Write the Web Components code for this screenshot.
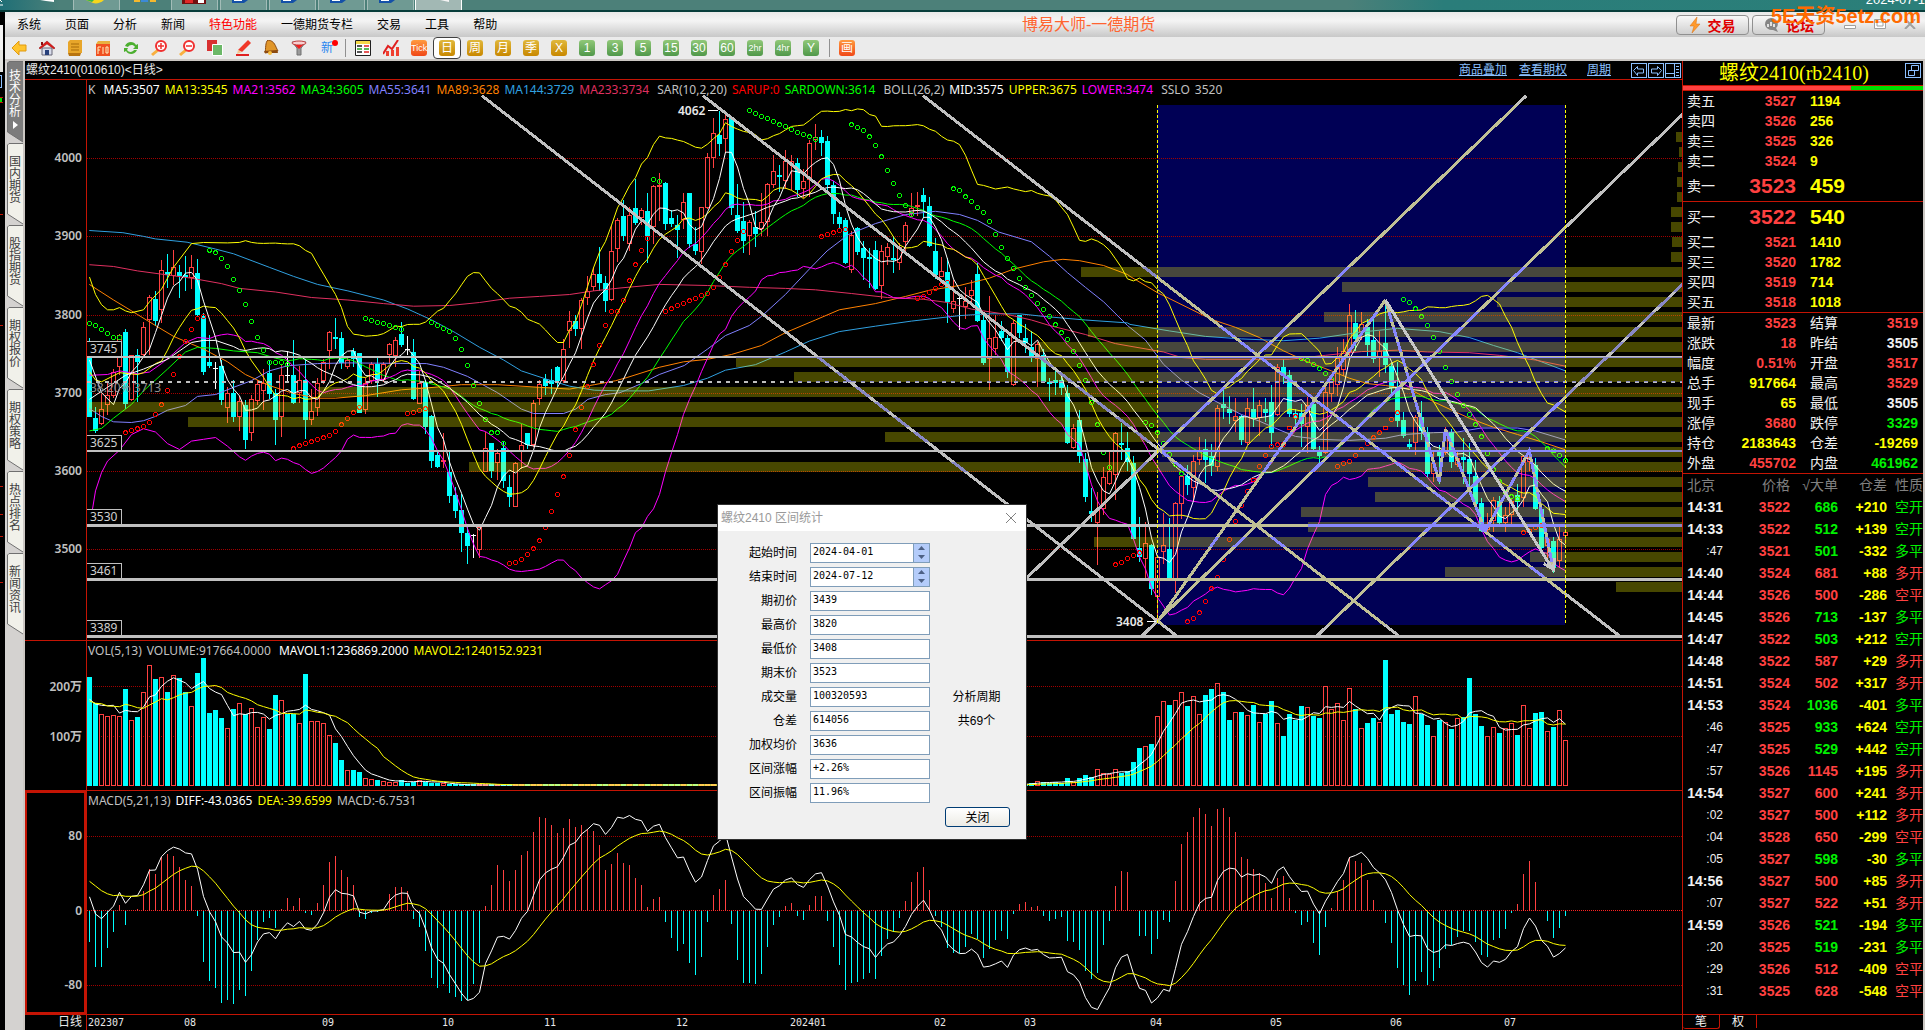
<!DOCTYPE html>
<html lang="zh-CN">
<head>
<meta charset="utf-8">
<title>博易大师</title>
<style>
  body {
    --rule: #c41404;
    --up: #ff4040;
    --down: #00ffff;
    --gain: #00f000;
    --frame: #cbc7c3;
    background: #000000;
    display: flex;
    flex-direction: column;
    font-family: "Liberation Sans", "Noto Sans CJK SC", sans-serif;
    font-size: 12px;
    line-height: 16px;
    margin: 0;
    min-height: 100vh;
    overflow: hidden;
    position: relative;
  }
</style>
</head>
<body>
<tb-taskbar></tb-taskbar>
<tb-window>
  <tb-menu-bar slot="menu"></tb-menu-bar>
  <tb-tool-bar slot="tools"></tb-tool-bar>
  <tb-side-tabs></tb-side-tabs>
  <tb-chart-board></tb-chart-board>
  <tb-quote-panel></tb-quote-panel>
</tb-window>
<tb-stats-dialog></tb-stats-dialog>

<script>
// Shared base
// Clones markup into an open shadow root
class TBElement extends HTMLElement {
  constructor() {
    super();
    const template = document.createElement( 'template' );
    template.innerHTML = this.markup();
    this.attachShadow( {mode: 'open'} );
    this.shadowRoot.appendChild( template.content.cloneNode( true ) );
  }
}

class TBTaskbar extends TBElement {
  markup() {
    const tiles = [73, 171, 220, 269, 318, 367].map( ( x ) => `<path d="M${x}.5 0V10.5h46V0" fill="#6f9a93" stroke="#a3bdb8"/>` ).join( '' );
    const docs = [232, 281, 330, 379].map( ( x ) => `<path d="M${x} 0h16l-4 3H${x}z" fill="#1450a8"/><path d="M${x + 2} 0h8v1h-8z" fill="#ffffff"/>` ).join( '' );
    return `
      <style>
        :host {
          background: linear-gradient( to right, #1f6f76 0, #4c8079 60px, #4c8079 70%, #2a7d7a 75%, #2b7f79 100% );
          border-bottom: 2px solid #063c3a;
          box-sizing: border-box;
          display: block;
          height: 12px;
          overflow: hidden;
          position: relative;
        }
        svg {
          display: block;
        }
        time {
          color: #ffffff;
          font-size: 13px;
          line-height: 14px;
          position: absolute;
          right: 0;
          top: -7px;
          white-space: nowrap;
        }
      </style>
      <svg width="600" height="10" aria-hidden="true">
        ${tiles}
        <path d="M415.5 0V10.5h46V0" fill="#a2b8b4" stroke="#ffffff"/>
        <path d="M40 0h14v2l-8-1z" fill="#ffffff"/>
        <path d="M0 5h3M0 0l2 2" stroke="#ffffff"/>
        <path d="M86 0h18c-3 3-8 4-11 3z" fill="#f7d51d"/><path d="M86 0h8l-2 2z" fill="#39b54a"/>
        <path d="M134 0h6v2h-6zM150 0h6v2h-6z" fill="#f5b82e"/><path d="M141 0h7v2h-7z" fill="#3b8ad8"/>
        <path d="M182 0h24v4h-24z" fill="#701010"/><path d="M185 0h8v3h-8z" fill="#e02828"/><path d="M198 0h6v3h-6z" fill="#ffffff"/>
        ${docs}
        <path d="M440 0h9v2z" fill="#f4f4f4"/>
      </svg>
      <time>2024-07-1</time>
    `;
  }
}

class TBWindow extends TBElement {
  markup() {
    return `
      <style>
        :host {
          display: flex;
          flex: 1 0 auto;
        }
        svg {
          flex: none;
        }
        main {
          display: flex;
          flex: 1;
          flex-direction: column;
          min-width: 0;
        }
        div {
          display: flex;
          flex: 1;
        }
      </style>
      <svg width="5" height="600" shape-rendering="crispEdges" aria-hidden="true">
        <path d="M0 13h3v25h-3z" fill="#f4f4f4"/><path d="M0 38h3v22h-3z" fill="#e4e4e0"/>
        <path d="M0 63.5h1.5v12H0" fill="none" stroke="#8cc0ff"/>
        <path d="M0 86h2v4H0z" fill="#00e000"/>
        <path d="M0 85h3M0 90h3M0 202h3M0 313h3M0 474h3M0 502h3M0 524h3M0 570h3" stroke="#c41404"/>
      </svg>
      <main>
        <slot name="menu"></slot>
        <slot name="tools"></slot>
        <div><slot></slot></div>
      </main>
    `;
  }
}

class TBMenuBar extends TBElement {
  markup() {
    const items = ['系统', '页面', '分析', '新闻', '特色功能', '一德期货专栏', '交易', '工具', '帮助'];
    return `
      <style>
        :host {
          align-items: center;
          background: linear-gradient( #e8e8e8, #f4f4f4 35%, #c8c8c8 );
          display: flex;
          height: 25px;
          position: relative;
        }
        nav {
          display: flex;
        }
        nav a {
          color: #000000;
          padding: 0 12px;
          text-decoration: none;
        }
        nav a:nth-child( 5 ) {
          color: #ff0000;
        }
        h1 {
          color: #ff6430;
          font-size: 16px;
          font-weight: normal;
          line-height: 24px;
          margin: 0 auto;
          padding-right: 8px;
        }
        .tools {
          display: flex;
          gap: 3px;
          padding-right: 10px;
        }
        .tools button {
          align-items: center;
          background: linear-gradient( #f8f8f8, #d0d0d0 );
          border: 1px solid #909090;
          border-radius: 4px;
          color: #e00000;
          display: flex;
          font: bold 14px "Noto Sans CJK SC", sans-serif;
          gap: 6px;
          height: 20px;
          justify-content: center;
          padding: 0;
          width: 73px;
        }
        .box {
          background: none;
          border: 0;
          height: 20px;
          padding: 0;
          width: 30px;
        }
        strong {
          color: #ff6a00;
          font-size: 20px;
          line-height: 24px;
          position: absolute;
          right: 4px;
          top: -8px;
          white-space: nowrap;
        }
      </style>
      <nav>${items.map( ( item ) => `<a href="#">${item}</a>` ).join( '' )}</nav>
      <h1>博易大师-一德期货</h1>
      <div class="tools">
        <button type="button">
          <svg width="12" height="16"><path d="M8 0L1 9h4L3 16l8-9H7z" fill="#ff9a2e" stroke="#d87010" stroke-width=".5"/></svg>交易
        </button>
        <button type="button">
          <svg width="17" height="16"><path d="M8 1a7 6 0 1 0 2 12l5 2-2-4A7 6 0 0 0 8 1z" fill="#858585"/><path d="M5 7v3M8 5v4M11 7v3" stroke="#ffffff" stroke-width="1.5"/></svg>论坛
        </button>
      </div>
      <button class="box" type="button" aria-label="最小化"><svg width="12" height="10"><path d="M.5 6.5h11v3H.5z" fill="#ffffff" stroke="#a0a0a0"/></svg></button>
      <button class="box" type="button" aria-label="还原"><svg width="12" height="10"><path d="M.5.5h11v9H.5zM3 3h6v4H3z" fill="#ffffff" stroke="#a0a0a0"/></svg></button>
      <button class="box" type="button" aria-label="关闭"><svg width="12" height="10"><path d="M1 0l10 10M11 0L1 10" stroke="#a0a0a0" stroke-width="2"/></svg></button>
      <strong>5E天资5etz.com</strong>
    `;
  }
}

// Toolbar drawings on a 16 x 16 field
const ICONS = {
  '后退': '<path d="M1 8l7-7v4h7v6H8v4z" fill="#ffc42e" stroke="#e09a10"/>',
  '首页': '<path d="M3 8h10v7H3z" fill="#d8dcea" stroke="#667"/><path d="M0 8l8-7 8 7-1 1-7-5-7 5z" fill="#e01818" stroke="#8c1010" stroke-width=".5"/><path d="M6 10h4v5H6z" fill="#28407a"/><path d="M2 2h2v3H2z" fill="#8c1010"/>',
  '公告': '<path d="M3 0h12v13H1V2z" fill="#e8a62a"/><path d="M1 13h13l-1 3H2z" fill="#b87410"/><path d="M4 4h8M4 7h8M4 10h8" stroke="#a86a08"/>',
  'F10': '<path d="M1 4h14v12H1z" fill="#f05020"/><path d="M1 4l2-3h12v3z" fill="#e8b040"/><path d="M3 14V7h3M3 10h2M8 7v7M11 7h2v6h-2z" fill="none" stroke="#fff0c0"/>',
  '刷新': '<path d="M2 6c2-5 9-5 11-1l2-1v5h-5l2-2c-2-3-6-2-7 0zM14 10c-2 5-9 5-11 1l-2 1V8h4L4 10c2 3 6 2 7 0z" fill="#4caf30"/>',
  '放大': '<path d="M6 9l2 2-6 5-2-2z" fill="#f8b040"/><circle cx="10" cy="6" r="5" fill="#ffffff" stroke="#f03030" stroke-width="2"/><path d="M7 6h6M10 3v6" stroke="#f03030" stroke-width="1.5"/>',
  '缩小': '<path d="M6 9l2 2-6 5-2-2z" fill="#f8b040"/><circle cx="10" cy="6" r="5" fill="#ffffff" stroke="#f03030" stroke-width="2"/><path d="M7 6h6" stroke="#f03030" stroke-width="1.5"/>',
  '叠加': '<path d="M0 0h10v11H0z" fill="#d83030"/><path d="M5.5 4.5h10v11h-10z" fill="#6cb868" stroke="#ffffff"/>',
  '画笔': '<path d="M13 0l3 3-9 9-4-2z" fill="#f03828"/><path d="M3 10l4 2-5 2z" fill="#f4c890"/><path d="M1 15h13" stroke="#e02020" stroke-width="2"/>',
  '预警': '<path d="M5 0c7 1 7 6 10 11L2 13C3 9 2 2 5 0z" fill="#e0962a" stroke="#8c4a10"/><path d="M1 11l13-1 1 3H2z" fill="#8c4a10"/><circle cx="7" cy="13" r="2" fill="#f8c040"/>',
  '筛选': '<path d="M1 2h14l-5 6v7H6V8z" fill="#9a9a9a" stroke="#707070"/><ellipse cx="8" cy="3" rx="7" ry="2" fill="#f8d0d0" stroke="#c04040"/><path d="M4 5h8L8 9z" fill="#f02020"/>',
  '报价': '<path d="M.5.5h15v15H.5z" fill="#ffffff" stroke="#202020"/><path d="M1 1h14v3H1z" fill="#f4d848"/><path d="M2 6h5M2 12h5" stroke="#202020" stroke-width="1.5"/><path d="M2 9h5M9 9h5" stroke="#20a020" stroke-width="1.5"/><path d="M9 6h5M9 12h5" stroke="#e02020" stroke-width="1.5"/>',
  '分时': '<path d="M3 11h3v5H3zM8 10h3v6H8zM13 7h3v9h-3z" fill="#f04030"/><path d="M0 14l5-8 4 3 6-9" fill="none" stroke="#e02020" stroke-width="2"/>'
};

class TBToolBar extends TBElement {
  markup() {
    const icon = ( name ) => `<button type="button" title="${name}"><svg width="16" height="16">${ICONS[name]}</svg></button>`;
    const chip = ( text, kind ) => `<button type="button"${text === '日' ? ' class="on"' : ''}><span class="${kind}">${text}</span></button>`;
    return `
      <style>
        :host {
          align-items: center;
          background: #ebebeb;
          border-bottom: 2px solid var( --frame );
          box-sizing: border-box;
          display: flex;
          height: 24px;
        }
        button {
          align-items: center;
          background: none;
          border: 0;
          display: flex;
          height: 22px;
          justify-content: center;
          padding: 0;
          width: 28px;
        }
        .on {
          background: #ffffff;
          border: 1px solid #404040;
          border-radius: 4px;
        }
        span {
          border-radius: 3px;
          color: #ffffff;
          font: 12px/16px "Liberation Sans", "Noto Sans CJK SC", sans-serif;
          height: 16px;
          text-align: center;
          width: 16px;
        }
        .gold {
          background: linear-gradient( #e0b83c, #c88800 );
        }
        .green {
          background: linear-gradient( #90c878, #50984a );
        }
        .orange {
          background: linear-gradient( #ff9a40, #f04818 );
        }
        .small {
          font-size: 9px;
        }
        .news {
          color: #2a86f0;
          position: relative;
        }
        .news::after {
          background: #ff0000;
          border-radius: 50%;
          content: "";
          height: 6px;
          position: absolute;
          right: -3px;
          top: 0;
          width: 6px;
        }
        i {
          border-left: 1px solid #909090;
          height: 18px;
          margin: 0 3px 0 4px;
        }
      </style>
      ${Object.keys( ICONS ).slice( 0, 11 ).map( icon ).join( '' )}
      ${chip( '新', 'news' )}<i></i>
      ${icon( '报价' )}${icon( '分时' )}${chip( 'Tick', 'orange small' )}
      ${['日', '周', '月', '季', 'X'].map( ( t ) => chip( t, 'gold' ) ).join( '' )}
      ${['1', '3', '5', '15', '30', '60'].map( ( t ) => chip( t, 'green' ) ).join( '' )}
      ${chip( '2hr', 'green small' )}${chip( '4hr', 'green small' )}${chip( 'Y', 'green' )}<i></i>
      ${chip( '画', 'orange' )}
    `;
  }
}

class TBSideTabs extends TBElement {
  markup() {
    const tabs = ['技术分析', '国内期货', '股指期货', '期权报价', '期权策略', '热点排名', '新闻资讯'];
    return `
      <style>
        :host {
          background: #d4d2d0;
          border-right: 2px solid var( --frame );
          box-sizing: border-box;
          display: flex;
          flex: none;
          flex-direction: column;
          width: 20px;
        }
        button {
          background: none;
          border: 0;
          display: grid;
          height: 82px;
          margin: 0 0 0 2px;
          padding: 0;
          width: 16px;
        }
        svg, span {
          grid-area: 1 / 1;
        }
        path {
          fill: #f1f1ea;
          stroke: #707070;
        }
        span {
          color: #404040;
          font: 12px/12px "Noto Sans CJK SC", sans-serif;
          padding: 12px 2px 0 2px;
          width: 12px;
        }
        .on path {
          fill: #7c7c7c;
        }
        .on span {
          color: #ffffff;
          padding-top: 8px;
        }
        .on .mark {
          fill: #ffffff;
          stroke: none;
        }
      </style>
      ${tabs.map( ( tab, i ) => `
        <button type="button"${i === 0 ? ' class="on"' : ''}>
          <svg width="16" height="82">
            <path d="M16 .5H2L.5 2V71L16 81"/>
            ${i === 0 ? '<path class="mark" d="M6 60l5 4-5 4z"/>' : ''}
          </svg>
          <span>${tab}</span>
        </button>` ).join( '' )}
    `;
  }
}

// Daily bars: kind high,top,bottom,low in plot ticks
// u rises, d falls, w closes level
const BARS = `
d710,762,926,926 d898,930,964,970 u864,906,945,950 u828,865,895,922 u795,803,870,875 u698,702,790,810 d685,693,890,905 u755,757,880,882
d740,757,775,885 u665,680,757,765 u592,598,661,755 d580,602,662,676 u495,523,632,667 d479,529,536,572 u468,515,540,563 d510,529,538,600
d484,536,543,579 u481,513,545,575 d492,531,646,648 d640,648,802,812 d700,776,787,793 w776,793,793,850 d770,787,880,893 u845,862,901,943
d825,862,927,940 u870,882,926,966 d880,894,990,1014 u865,877,970,992 u825,835,882,893 u795,834,855,908 d770,806,863,877 d850,861,934,1003
u785,812,926,982 w744,812,812,830 d715,812,888,890 u787,826,860,888 d768,826,934,987 u850,909,934,950 u820,834,901,924 u768,776,827,835
u689,694,746,795 d655,708,711,740 d693,710,778,795 u765,770,790,796 d737,745,768,790 d750,752,915,916 u820,834,907,918 u776,782,828,835
d763,782,824,872 u775,782,826,830 u722,727,757,780 u708,716,760,790 d665,698,729,734 w704,740,740,756 d711,747,878,880 u800,834,890,892
d825,831,955,973 d922,924,1047,1067 d1020,1031,1064,1066 u970,1044,1050,1066 d1023,1077,1143,1163 d1120,1142,1186,1204 d1138,1183,1245,1298 d1220,1245,1282,1330
w1248,1250,1250,1314 u1220,1229,1292,1315 u967,1011,1077,1078 d998,999,1076,1094 u1015,1027,1053,1100 d995,1012,1103,1122 d1087,1120,1146,1174 u1050,1052,1173,1174
u945,1003,1024,1070 d970,971,1004,1014 u880,887,1005,1010 u825,835,877,895 d808,823,841,865 d795,825,835,864 d787,788,829,845 u712,739,827,832
u635,664,689,738 d645,662,684,704 u600,606,684,740 u538,580,600,618 u515,534,570,580 d458,534,557,580 d540,557,607,638 u400,471,606,608
u380,386,464,500 d330,374,429,443 u348,372,450,470 d272,352,392,398 u352,358,380,400 d310,360,430,502 u288,292,403,450 u257,288,291,388
d281,282,397,412 d357,380,396,403 d370,398,412,490 u312,335,385,410 d311,312,450,462 d405,450,470,480 u348,350,474,505 u202,213,353,355
u105,147,215,243 d85,150,175,210 u97,107,163,200 d104,105,353,372 d287,372,414,420 d335,388,443,475 u385,391,430,480 d360,403,423,460
u310,390,410,430 u282,287,391,428 u205,251,288,298 d234,260,265,307 u192,223,277,300 u205,222,235,302 d215,228,303,322 u245,277,300,325
u165,174,276,322 u121,157,166,193 d138,158,172,208 d153,168,290,305 d278,288,368,395 d362,376,396,410 d380,385,503,505 u415,425,522,530
d405,408,472,480 d442,462,490,550 d462,488,492,572 d442,468,575,578 u455,471,566,602 u448,460,488,510 d430,490,496,530 u447,458,502,522
u390,400,445,470 u311,352,368,373 u307,343,348,375 d297,316,336,380 d322,347,456,458 d434,470,535,547 u488,526,541,543 d490,528,611,668
u550,608,631,640 w597,600,600,688 u570,608,625,658 u550,578,594,610 d503,533,662,665 d640,660,778,785 u595,710,768,852 u645,708,741,755
d663,690,710,718 d700,710,803,820 u660,668,840,842 d646,647,695,710 d670,710,722,750 d690,735,765,775 u720,727,768,845 d740,755,830,832
d820,830,835,883 d792,825,832,865 d815,826,846,865 d840,861,998,1000 u945,958,1013,1015 d908,935,1034,1052 d1025,1043,1147,1160 d1122,1184,1194,1215
u1132,1182,1218,1333 u1065,1093,1180,1195 u1018,1075,1112,1115 u968,972,1085,1155 d942,999,1003,1045 d968,1012,1050,1075 d1035,1054,1262,1264 d1203,1287,1313,1325
u1215,1272,1318,1375 d1277,1279,1399,1415 u1305,1311,1423,1490 u1190,1280,1297,1330 d1205,1290,1371,1373 u1160,1162,1378,1410 u1085,1090,1167,1207 d1060,1088,1113,1140
u1032,1049,1121,1157 u983,1017,1044,1060 d988,1015,1045,1108 d1002,1035,1061,1090 u895,901,1064,1075 d853,891,901,932 d870,905,915,945 u875,925,938,967
d922,925,989,1003 u875,903,999,1005 d847,906,930,955 u880,895,930,980 d875,906,915,940 d838,886,970,1007 u780,788,922,925 d768,788,812,835
d797,812,918,928 d905,916,930,955 d890,916,946,1010 u873,893,955,1027 d885,892,1014,1020 d1007,1023,1033,1062 u840,857,1025,1028 u815,822,863,885
u735,765,840,870 u712,745,797,815 u617,647,750,770 d632,667,712,745 u637,670,692,715 d657,678,728,760 d655,715,766,778 u690,745,765,818
d612,722,783,805 d777,786,848,865 d775,848,937,955 d912,935,978,985 d987,1000,1008,1015 u920,928,998,1032 d883,928,965,990 d955,968,1083,1093
u1020,1053,1083,1105 d1005,1022,1033,1112 u955,967,1027,1030 d960,968,1050,1068 u1018,1040,1058,1065 d985,1036,1046,1110 d998,1043,1083,1128 d1045,1090,1165,1175
d1150,1162,1240,1243 u1192,1220,1238,1243 u1147,1156,1212,1242 d1145,1158,1218,1222 u1175,1197,1218,1242 u1150,1158,1195,1220 d1110,1140,1160,1183 u1032,1035,1150,1175
u1012,1036,1050,1075 d1040,1058,1180,1183 d1165,1180,1287,1290 u1245,1262,1282,1318 d1257,1268,1342,1355 u1220,1262,1322,1342 u1235,1243,1255,1275
`.trim().split( /\s+/ ).map( ( bar ) => {
  const [high, top, bottom, low] = bar.slice( 1 ).split( ',' ).map( Number );
  return {kind: bar[0], high, top, bottom, low, close: bar[0] === 'd' ? bottom : top};
} );

const VOLUMES = [
  141, 220, 253, 259, 256, 259, 177, 271, 262, 187, 106, 147, 142, 186, 136, 144, 186, 229, 129, 84,
  249, 241, 264, 295, 237, 220, 252, 235, 292, 262, 297, 195, 211, 253, 252, 280, 132, 274, 274, 280,
  316, 339, 390, 421, 420, 426, 444, 448, 450, 454, 455, 456, 450, 460, 455, 450, 456, 458, 459, 460,
  ...Array( 92 ).fill( 465 ),
  464, 464, 463, 462, 461, 459, 453, 457, 458, 456, 458, 444, 455, 444, 435, 440, 417, 430, 432, 418,
  428, 424, 396, 354, 349, 342, 259, 214, 225, 211, 187, 228, 199, 253, 195, 177, 160, 186, 270, 247,
  246, 256, 225, 277, 251, 213, 280, 318, 252, 270, 228, 232, 258, 264, 169, 238, 220, 270, 175, 237,
  295, 279, 264, 277, 90, 252, 240, 276, 282, 199, 252, 285, 319, 270, 277, 297, 265, 261, 144, 252,
  288, 319, 292, 309, 293, 280, 315, 226, 294, 249, 246, 304, 291, 241, 331
];

const MACD = [
  935, 1010, 1010, 953, 905, 825, 884, 842, 838, 783, 717, 733, 680, 672, 678, 712, 750, 768, 857, 995,
  1052, 1073, 1118, 1110, 1121, 1079, 1097, 1022, 930, 876, 864, 893, 837, 804, 828, 804, 849, 854, 820, 765,
  696, 678, 720, 741, 765, 860, 866, 848, 846, 838, 792, 771, 771, 783, 866, 890, 963, 1043, 1073, 1061,
  1088, 1100, 1112, 1110, 1061, 998, 828, 765, 705, 720, 752, 720, 675, 663, 606, 561, 564, 585, 609, 594,
  567, 591, 585, 597, 603, 645, 720, 702, 669, 699, 705, 744, 765, 831, 806, 801, 876, 923, 963, 941,
  998, 1034, 980, 875, 795, 777, 750, 881, 989, 1058, 1058, 1061, 1031, 950, 884, 860, 828, 819, 857, 869,
  825, 798, 798, 872, 950, 1004, 1079, 1058, 1055, 1046, 1028, 1046, 978, 928, 905, 863, 813, 755, 726, 711,
  780, 857, 890, 953, 968, 970, 950, 913, 928, 983, 958, 929, 902, 926, 851, 822, 816, 831, 828, 857,
  872, 866, 860, 932, 935, 959, 1022, 1046, 1028, 944, 874, 768, 723, 726, 842, 917, 917, 971, 926, 870,
  876, 753, 642, 606, 561, 534, 552, 588, 537, 534, 561, 606, 681, 687, 717, 729, 759, 804, 744, 738,
  804, 849, 884, 876, 938, 974, 890, 834, 783, 750, 681, 693, 698, 750, 810, 842, 878, 938, 1013, 1064,
  1094, 1052, 1025, 1064, 1052, 1013, 958, 945, 920, 902, 902, 935, 976, 980, 929, 923, 896, 848, 822, 732,
  693, 756, 842, 872, 923, 893, 857
];

// Long averages: runs of x,y ticks, each with its own x origin
const LONG = {
  '#8080ff': [
    [0, '26,903 60,925 94,940 144,942 178,937 211,925 245,908 295,895 329,870 380,865 430,845 480,827 530,800 581,786 665,780 750,778 970,780 1018,790 1085,815 1169,860 1236,905 1270,917 1354,917 1388,905 1422,878 1472,865 1512,860'],
    [1512, '60,835 110,810 180,785 245,740 295,703 362,675 396,650 463,590 530,520 580,470 640,425 715,395 800,370 883,361 951,370 1001,386 1060,418 1152,445 1203,485 1253,530 1303,570 1354,610 1421,675'],
    [2940, '43,715 94,782 144,825 194,860 262,895 312,920 362,938 413,960 463,980 530,988 614,991 715,985 766,975 850,970 917,968 984,957 1085,957 1135,965 1219,990']
  ],
  '#ff8000': [
    [0, '26,562 94,605 161,645 211,675 262,705 346,740 413,775 463,810 530,840 598,862 665,875 715,875 800,868 900,852 970,847 1068,838 1169,838 1287,845 1371,850 1440,838 1500,827'],
    [1512, '20,818 110,790 178,775 245,768 312,755 396,730 463,695 547,660 614,632 715,615 800,595 867,578 951,565 1034,545 1102,520 1186,500 1240,493 1287,497 1354,510 1421,535'],
    [2940, '0,540 77,585 160,625 228,658 295,680 362,708 430,745 497,775 564,800 614,820 665,835 715,840 783,850 850,885 950,930 1018,955 1085,975 1152,995 1219,1017']
  ],
  '#30a0e0': [
    [0, '26,414 120,420 178,430 211,437 300,446 380,465 430,478 530,515 598,540 665,562 750,580 850,605 918,630 985,660 1051,695 1119,735 1186,770 1236,800 1304,822 1371,842 1440,853 1512,855'],
    [1512, '80,855 178,840 245,820 295,798 379,783 463,748 530,718 614,692 715,677 816,663 951,648 1034,643 1119,643 1186,650 1303,660 1421,668'],
    [2940, '0,672 110,690 211,705 312,712 430,717 530,710 648,693 749,683 866,692 950,708 1018,730 1085,750 1152,775 1219,800']
  ],
  '#e03060': [
    [0, '26,508 94,513 161,525 312,545 396,560 447,573 548,583 648,598 750,605 850,615 934,622 1035,620 1119,612 1203,600 1287,595 1371,590 1438,580 1512,572'],
    [1512, '110,562 245,565 362,570 463,573 547,577 648,587 749,598 850,603 917,612 984,630 1085,645 1152,660 1203,675 1303,700 1387,725'],
    [2940, '0,732 94,748 144,763 211,768 446,768 547,757 648,747 749,743 833,748 950,750 1034,757 1135,770 1219,787']
  ]
};

// Stop-and-reverse dots: first bar, then one reading per bar
const SAR_DOWN = [
  [0, 670, 675, 686, 697, 708, 708],
  [20, 468, 475, 491, 513, 549, 579, 617, 664, 708, 744, 777, 777, 777, 783],
  [46, 656, 661, 667, 670, 675, 681, 686],
  [57, 667, 675, 683, 692, 711, 741, 785, 840, 890, 934, 970, 970, 1000],
  [94, 274, 279],
  [110, 84, 92, 100, 106, 114, 123, 128, 136, 144, 150, 156, 164],
  [127, 123, 131, 139, 156, 180, 211, 249, 285, 318, 345, 370],
  [144, 299, 304, 321, 334, 351, 364, 389, 425, 461, 491, 518, 546, 571, 593, 615, 631, 650, 673, 695, 714, 747, 785, 826, 887, 948, 1025, 1066],
  [176, 942, 950, 970, 1000, 1030, 1058, 1083],
  [202, 766, 771, 782, 794, 807, 824],
  [219, 604, 612, 629, 651, 675, 708, 747, 791, 829, 865, 895, 920, 948, 981, 1027, 1072, 1105, 1135, 1146, 1152],
  [243, 1014, 1020, 1033, 1047]
];
const SAR_UP = [
  [6, 970, 964, 959, 953, 942, 920, 893, 854, 810, 761, 719, 686, 656, 650],
  [34, 1014, 1006, 1000, 995, 989, 984, 978, 967, 948, 931, 915, 900],
  [53, 917, 914, 909, 904],
  [70, 1330, 1327, 1319, 1305, 1289, 1267, 1231, 1187, 1140, 1091, 1033, 962, 901, 843, 783, 730, 675, 637, 637, 606, 552, 508, 469, 436],
  [96, 637, 629, 620, 615, 607, 601, 593, 587, 571, 543, 508, 472, 441, 417],
  [122, 431, 425, 420, 414, 411],
  [138, 601, 595, 584, 573, 563, 557],
  [171, 1333, 1327, 1316, 1308, 1300],
  [183, 1490, 1481, 1465, 1434, 1399, 1368, 1319, 1264, 1214, 1170, 1132, 1100, 1063, 1033, 1008, 1003, 1003, 957, 926],
  [208, 1063, 1055, 1049, 1033, 1016, 1000, 984, 970, 957, 934, 915],
  [239, 1245, 1240, 1231, 1225]
];

// Left ends of the volume-at-price bars, top to bottom
const PROFILE = [
  4469, 4477, 4474, 4472, 4472, 4455, 4455, 4458, 4455, 2803, 3534, 3968, 3483, 2822, 2682, 1837,
  1999, 665, 26, 302, 2254, 3030, 1089, 3606, 3626, 3419, 3438, 2839, 4060, 3822, 4301
];

const px = ( tick ) => Math.round( tick / 2.8 * 10 ) / 10;
const py = ( tick ) => Math.round( tick / 2.75 * 10 ) / 10;
const barX = ( i ) => 9.5 + 6 * i;
const line = ( points, color ) => `<polyline points="${points.join( ' ' )}" fill="none" shape-rendering="auto" stroke="${color}"/>`;

// Average over n bars, after hand-kept readings for the first ones
const average = ( values, n, lead, scale ) => {
  const points = lead.map( ( [i, y] ) => `${barX( i )},${scale( y )}` );
  for( let i = n - 1; i < values.length; i++ ) {
    const part = values.slice( i - n + 1, i + 1 );
    points.push( `${barX( i )},${scale( part.reduce( ( a, b ) => a + b ) / n )}` );
  }
  return points;
};

const band = ( values, n, side, lead ) => {
  const points = lead.map( ( [i, y] ) => `${barX( i )},${py( y )}` );
  for( let i = n - 1; i < values.length; i++ ) {
    const part = values.slice( i - n + 1, i + 1 );
    const mean = part.reduce( ( a, b ) => a + b ) / n;
    const dev = Math.sqrt( part.reduce( ( a, b ) => a + ( b - mean ) ** 2, 0 ) / n );
    points.push( `${barX( i )},${py( mean + side * 2 * dev )}` );
  }
  return points;
};

const grid = ( rows ) => rows.map( ( y ) => `<path d="M7 ${Math.round( y ) + 0.5}H1602" stroke="#a00000" stroke-dasharray="1 1"/>` ).join( '' );

const drawCandles = () => BARS.map( ( bar, i ) => {
  const x = barX( i );
  const [high, top, bottom, low] = [bar.high, bar.top, bar.bottom, bar.low].map( ( v ) => Math.round( v / 2.75 ) );
  if( bar.kind === 'w' ) {
    return `<path d="M${x} ${high}V${low}M${x - 2.5} ${top + 0.5}h5" stroke="#ffffff"/>`;
  }
  if( bar.kind === 'd' ) {
    return `<path d="M${x} ${high}V${low}" stroke="#00ffff"/><rect x="${x - 2.5}" y="${top}" width="5" height="${Math.max( 2, bottom - top )}" fill="#00ffff"/>`;
  }
  return `<path d="M${x} ${high}V${top}M${x} ${bottom}V${low}M${x - 2} ${top + 0.5}h4V${Math.max( bottom, top + 2 ) - 0.5}h-4z" fill="none" stroke="#ff4040"/>`;
} ).join( '' );

const drawDots = ( runs, color ) => runs.map( ( [first, ...ys] ) => ys.map( ( y, i ) => `<circle cx="${barX( first + i )}" cy="${py( y )}" r="2" fill="none" stroke="${color}"/>` ).join( '' ) ).join( '' );

const drawPrice = () => {
  const closes = BARS.map( ( bar ) => bar.close );
  const profile = PROFILE.map( ( x, i ) => `<rect x="${Math.round( x / 2.8 )}" y="${52 + 15 * i}" width="${1602 - Math.round( x / 2.8 )}" height="10"/>` ).join( '' );
  const rays = [
    [1125, 43, 3075, 1532], [1744, 43, 3697, 1532], [2360, 43, 4315, 1532],
    [2479, 1532, 4050, 43], [2970, 1532, 4487, 95], [3460, 1532, 4487, 562], [3017, 1490, 3655, 605]
  ].map( ( [a, b, c, d] ) => `M${px( a )} ${py( b )}L${px( c )} ${py( d )}` ).join( '' );
  const zigzag = [[3655, 605], [3806, 1105], [3823, 960], [3935, 1240], [4058, 1020], [4126, 1350]].map( ( [x, y] ) => `${px( x )},${py( y )}` );
  const long = Object.entries( LONG ).map( ( [color, runs] ) => line( runs.flatMap( ( [origin, run] ) => run.split( ' ' ).map( ( p ) => {
    const [x, y] = p.split( ',' ).map( Number );
    return `${px( origin + x )},${py( y )}`;
  } ) ), color ) ).join( '' );

  return `
    <defs>
      <clipPath id="profile">${profile}</clipPath>
      <clipPath id="range"><rect x="1077" y="25" width="408" height="520"/></clipPath>
      <g id="rays" fill="none">
        <path d="${rays}" stroke-width="3"/>
        <path d="M7 277H1602" stroke-width="2"/>
        <path d="M7 371H1602" stroke-width="2"/>
        <path d="M7 445.5H1602M7 499.5H1602M7 556.5H1602" stroke-width="3"/>
        <path d="M7 302H1602" stroke-width="2" stroke-dasharray="4 5"/>
        <polyline points="${zigzag.join( ' ' )}" stroke-width="3"/>
      </g>
    </defs>
    <rect x="1077" y="25" width="408" height="520" fill="#000055"/>
    ${grid( [78, 156, 235, 313, 391, 469] )}
    ${drawCandles()}
    ${long}
    ${line( average( closes, 34, [[0, 965], [2, 958], [4, 930], [7, 892], [9, 855], [13, 795], [16, 748], [18, 735], [21, 738], [24, 745], [28, 750], [31, 765]], py ), '#00ff00' )}
    ${line( average( closes, 21, [[0, 812], [3, 810], [5, 800], [8, 808], [10, 803], [12, 780], [14, 752], [16, 722], [18, 708]], py ), '#ff00ff' )}
    ${line( average( closes, 13, [[0, 802], [1, 825], [2, 830], [5, 805], [8, 810], [9, 805], [11, 780]], py ), '#ffff00' )}
    ${line( average( closes, 26, [[0, 878], [3, 845], [6, 812], [9, 795], [13, 768], [17, 722], [19, 716], [21, 716], [24, 733]], py ), '#ffffff' )}
    ${line( average( closes, 5, [[0, 770], [2, 860]], py ), '#ffffff' )}
    ${line( band( closes, 26, -1, [[0, 542], [1, 590], [2, 618], [3, 632], [4, 632], [5, 626], [6, 635], [7, 640], [9, 632], [10, 610], [12, 575], [14, 515], [17, 450], [19, 447], [23, 448]] ), '#ffff00' )}
    ${line( band( closes, 26, 1, [[0.5, 1180], [1, 1130], [2, 1080], [3, 1048], [5, 1018], [7, 975], [9, 959], [11, 968], [13, 1000], [15, 1016], [17, 993], [19, 988], [21, 983], [23, 1007]] ), '#ff00ff' )}
    ${drawDots( SAR_DOWN, '#00ff00' )}
    ${drawDots( SAR_UP, '#ff0000' )}
    <g fill="#ffff00" fill-opacity=".28">${profile}</g>
    <use href="#rays" stroke="#c0c0c0"/>
    <g clip-path="url(#range)"><use href="#rays" stroke="#c0c095"/></g>
    <g clip-path="url(#profile)"><use href="#rays" stroke="#8888c4"/></g>
    <g clip-path="url(#range)"><g clip-path="url(#profile)"><use href="#rays" stroke="#8888ff"/></g></g>
    <path d="M${px( 3655 )} ${py( 605 )}L${px( 4126 )} ${py( 1350 )}M${px( 4098 )} ${py( 1330 )}l10 6 1 -12" fill="none" stroke="#c8c8c8" stroke-width="3"/>
    <path d="M1077.5 25V545M1485.5 25V545" stroke="#ffff00" stroke-dasharray="3 2"/>
    <path d="M628 30.5h10M1067 541.5h9" stroke="#ffffff"/>
  `;
};

const drawVolume = () => {
  const scale = ( v ) => Math.round( ( v / 3 - 11 ) * 10 ) / 10;
  const bars = VOLUMES.map( ( v, i ) => {
    const top = Math.min( 143, Math.round( scale( v ) ) );
    const x = barX( i );
    return BARS[i].kind === 'u'
      ? `<path d="M${x - 2} ${top + 0.5}h4V144.5h-4z" fill="none" stroke="#ff4040"/>`
      : `<rect x="${x - 2.5}" y="${top}" width="5" height="${145 - top}" fill="#00ffff"/>`;
  } ).join( '' );
  return `
    ${grid( [45, 95] )}
    ${bars}
    ${line( average( VOLUMES, 5, [[0, 208], [1, 222], [2, 226], [3, 227]], scale ), '#ffffff' )}
    ${line( average( VOLUMES, 13, [213, 220, 221, 228, 229, 230, 223, 227, 233, 235, 225, 216].map( ( y, i ) => [i, y] ), scale ), '#ffff00' )}
  `;
};

// The signal line moves by a sixth of its distance to DIFF on each bar
const drawMacd = () => {
  const scale = ( v ) => Math.round( ( v / 3 - 161 ) * 10 ) / 10;
  const dea = [];
  const diff = [];
  let level = 754;
  const bars = MACD.map( ( v, i ) => {
    if( i > 0 ) {
      level += ( v - 841.4 ) / 12;
    }
    dea.push( `${barX( i )},${scale( level )}` );
    diff.push( `${barX( i )},${scale( level + ( v - 842 ) / 2 )}` );
    return `<path d="M${barX( i )} 120V${Math.round( scale( v ) )}" stroke="${v < 842 ? '#ff4040' : '#00ffff'}"/>`;
  } ).join( '' );
  return `
    ${grid( [45, 194] )}
    <path d="M7 119.5H1602" stroke="#ff2020" stroke-dasharray="1 1"/>
    ${bars}
    ${line( diff, '#ffffff' )}
    ${line( dea, '#ffff00' )}
  `;
};

// One pane: value axis on the left, plot on the right
class TBChartPane extends TBElement {
  markup() {
    return `
      <style>
        :host {
          border-top: 1px solid var( --rule );
          display: grid;
          font-family: "Noto Sans", "Noto Sans CJK SC", sans-serif;
          grid-template-columns: 61px 1fr;
          min-height: 0;
        }
        :host( [selected] ) .axis {
          outline: 2px solid var( --rule );
          outline-offset: -2px;
        }
        .axis {
          color: #c0c0c0;
          font-weight: 600;
          position: relative;
        }
        .axis span {
          position: absolute;
          right: 4px;
          transform: translateY( -50% );
        }
        .plot {
          border-left: 1px solid var( --rule );
          min-width: 0;
          position: relative;
        }
        svg {
          display: block;
          height: 100%;
          left: 0;
          position: absolute;
          top: 0;
          width: 100%;
        }
        .legend {
          color: #c0c0c0;
          display: flex;
          gap: 5px;
          left: 1px;
          line-height: 20px;
          position: absolute;
          top: 0;
          white-space: pre;
        }
        .mark {
          color: #d0d0d0;
          line-height: 14px;
          position: absolute;
          transform: translateY( -100% );
        }
        .peak {
          color: #e8e8e8;
          font-weight: 600;
        }
        .box {
          background: #000000;
          border: 1px solid #c0c0c0;
          border-left: 0;
          padding: 0 4px 0 3px;
        }
        .ratio {
          color: #909090;
        }
      </style>
      <div class="axis"></div>
      <div class="plot">
        <svg preserveAspectRatio="none" shape-rendering="crispEdges" role="img"></svg>
        <div class="legend"></div>
      </div>
    `;
  }

  set data( {height, draw, axis, legend, marks = []} ) {
    const root = this.shadowRoot;
    const svg = root.querySelector( 'svg' );
    svg.setAttribute( 'viewBox', `7 0 1595 ${height}` );
    svg.innerHTML = draw();
    root.querySelector( '.axis' ).innerHTML = axis.map( ( [text, y] ) => `<span style="top: ${y / height * 100}%">${text}</span>` ).join( '' );
    root.querySelector( '.legend' ).innerHTML = legend.map( ( [text, color] ) => `<span style="color: ${color}">${text}</span>` ).join( '' );
    root.querySelector( '.plot' ).insertAdjacentHTML( 'beforeend', marks.map( ( [text, x, y, kind] ) => `<span class="mark ${kind}" style="left: ${x / 1595 * 100}%; top: ${y / height * 100}%">${text}</span>` ).join( '' ) );
  }
}

class TBChartBoard extends TBElement {
  constructor() {
    super();
    const [price, volume, macd] = this.shadowRoot.querySelectorAll( 'tb-chart-pane' );
    const grey = '#c0c0c0';

    price.data = {
      height: 560,
      draw: drawPrice,
      axis: [['4000', 78], ['3900', 156], ['3800', 235], ['3700', 313], ['3600', 391], ['3500', 469]],
      legend: [
        ['K ', grey], ['MA5:3507', '#ffffff'], ['MA13:3545', '#ffff00'], ['MA21:3562', '#ff00ff'], ['MA34:3605', '#00ff00'],
        ['MA55:3641', '#8080ff'], ['MA89:3628', '#ff8000'], ['MA144:3729', '#30a0e0'], ['MA233:3734 ', '#e03060'],
        ['SAR(10,2,20)', grey], ['SARUP:0', '#ff0000'], ['SARDOWN:3614 ', '#00ff00'], ['BOLL(26,2)', grey],
        ['MID:3575', '#ffffff'], ['UPPER:3675', '#ffff00'], ['LOWER:3474 ', '#ff00ff'], ['SSLO', grey], ['3520', grey]
      ],
      marks: [
        ['3745', 0, 277, 'box'], ['3625', 0, 371, 'box'], ['3530', 0, 445, 'box'], ['3461', 0, 499, 'box'], ['3389', 0, 556, 'box'],
        ['38.20% 3713', 3, 315, 'ratio'], ['4062', 591, 38, 'peak'], ['3408', 1029, 549, 'peak']
      ]
    };
    volume.data = {
      height: 149,
      draw: drawVolume,
      axis: [['200万', 46], ['100万', 96]],
      legend: [['VOL(5,13)', grey], ['VOLUME:917664.0000 ', grey], ['MAVOL1:1236869.2000', '#ffffff'], ['MAVOL2:1240152.9231', '#ffff00']]
    };
    macd.data = {
      height: 223,
      draw: drawMacd,
      axis: [['80', 45], ['0', 120], ['-80', 194]],
      legend: [['MACD(5,21,13)', grey], ['DIFF:-43.0365', '#ffffff'], ['DEA:-39.6599', '#ffff00'], ['MACD:-6.7531', grey]]
    };
  }

  markup() {
    const months = [['202307', 0], ['08', 16], ['09', 39], ['10', 59], ['11', 76], ['12', 98], ['202401', 117], ['02', 141], ['03', 156], ['04', 177], ['05', 197], ['06', 217], ['07', 236]];
    return `
      <style>
        :host {
          background: #000000;
          color: #e8e8e8;
          display: grid;
          flex: 1;
          grid-template-rows: 18px 561fr 150fr 224fr 16px;
          min-width: 0;
        }
        header {
          align-items: center;
          display: flex;
          gap: 12px;
          padding: 0 1px;
        }
        header a {
          color: #8cc0ff;
        }
        header a:nth-of-type( 3 ) {
          margin: 0 8px;
        }
        h2 {
          flex: 1;
          font-size: 12px;
          font-weight: normal;
          margin: 0;
        }
        .steps {
          display: flex;
          gap: 1px;
        }
        .steps button {
          background: none;
          border: 1px solid #8cc0ff;
          height: 15px;
          padding: 0;
          width: 16px;
        }
        .steps svg {
          display: block;
          fill: none;
          stroke: #8cc0ff;
        }
        footer {
          border-top: 1px solid var( --rule );
          display: grid;
          grid-template-columns: 61px 1fr;
          line-height: 15px;
        }
        footer b {
          font-weight: normal;
          padding-right: 4px;
          text-align: right;
        }
        footer div {
          border-left: 1px solid var( --rule );
          font-family: "DejaVu Sans Mono", monospace;
          font-size: 10px;
          position: relative;
        }
        footer time {
          position: absolute;
          top: 0;
        }
      </style>
      <header>
        <h2>螺纹2410(010610)&lt;日线&gt;</h2>
        <a href="#">商品叠加</a><a href="#">查看期权</a><a href="#">周期</a>
        <div class="steps">
          <button type="button" aria-label="向左"><svg width="14" height="13"><path d="M1.5 6.5l4-4v2.500h6v4h-6v2.500z"/></svg></button>
          <button type="button" aria-label="向右"><svg width="14" height="13"><path d="M12.5 6.5l-4-4v2.500h-6v4h6v2.500z"/></svg></button>
          <button type="button" aria-label="布局"><svg width="14" height="13"><path d="M8.5 0v13M0 9.5h8M10 2.5h3M10 5.5h3M10 8.5h3M10 11.5h3"/></svg></button>
        </div>
      </header>
      <tb-chart-pane></tb-chart-pane>
      <tb-chart-pane></tb-chart-pane>
      <tb-chart-pane selected></tb-chart-pane>
      <footer>
        <b>日线</b>
        <div>${months.map( ( [text, i] ) => `<time style="left: ${( 1 + 6 * i ) / 1595 * 100}%">${text}</time>` ).join( '' )}</div>
      </footer>
    `;
  }
}

const ASKS = [['卖五', 3527, 1194], ['卖四', 3526, 256], ['卖三', 3525, 326], ['卖二', 3524, 9], ['卖一', 3523, 459]];
const BIDS = [['买一', 3522, 540], ['买二', 3521, 1410], ['买三', 3520, 1782], ['买四', 3519, 714], ['买五', 3518, 1018]];
const STATS = [
  ['最新', '3523', 'r', '结算', '3519', 'r'], ['涨跌', '18', 'r', '昨结', '3505', 'w'], ['幅度', '0.51%', 'r', '开盘', '3517', 'r'],
  ['总手', '917664', 'y', '最高', '3529', 'r'], ['现手', '65', 'y', '最低', '3505', 'w'], ['涨停', '3680', 'r', '跌停', '3329', 'g'],
  ['持仓', '2183643', 'y', '仓差', '-19269', 'y'], ['外盘', '455702', 'r', '内盘', '461962', 'g']
];
const TICKS = [
  ['14:31', 3522, 686, '+210', '空开', 'g'], ['14:33', 3522, 512, '+139', '空开', 'g'], [':47', 3521, 501, '-332', '多平', 'g'],
  ['14:40', 3524, 681, '+88', '多开', 'r'], ['14:44', 3526, 500, '-286', '空平', 'r'], ['14:45', 3526, 713, '-137', '多平', 'g'],
  ['14:47', 3522, 503, '+212', '空开', 'g'], ['14:48', 3522, 587, '+29', '多开', 'r'], ['14:51', 3524, 502, '+317', '多开', 'r'],
  ['14:53', 3524, 1036, '-401', '多平', 'g'], [':46', 3525, 933, '+624', '空开', 'g'], [':47', 3525, 529, '+442', '空开', 'g'],
  [':57', 3526, 1145, '+195', '多开', 'r'], ['14:54', 3527, 600, '+241', '多开', 'r'], [':02', 3527, 500, '+112', '多开', 'r'],
  [':04', 3528, 650, '-299', '空平', 'r'], [':05', 3527, 598, '-30', '多平', 'g'], ['14:56', 3527, 500, '+85', '多开', 'r'],
  [':07', 3527, 522, '+51', '多开', 'r'], ['14:59', 3526, 521, '-194', '多平', 'g'], [':20', 3525, 519, '-231', '多平', 'g'],
  [':29', 3526, 512, '-409', '空平', 'r'], [':31', 3525, 628, '-548', '空平', 'r']
];

class TBQuotePanel extends TBElement {
  markup() {
    const level = ( [name, price, size] ) => `<tr${name.endsWith( '一' ) ? ' class="best"' : ''}><th>${name}</th><td class="r">${price}</td><td class="y size">${size}</td></tr>`;
    return `
      <style>
        :host {
          background: #000000;
          border-left: 1px solid var( --rule );
          border-right: 2px solid var( --frame );
          box-sizing: border-box;
          color: #f0f0f0;
          display: flex;
          flex: none;
          flex-direction: column;
          font-size: 14px;
          width: 243px;
        }
        header {
          align-items: center;
          display: flex;
          height: 24px;
        }
        h2 {
          color: #ffff00;
          flex: 1;
          font: 20px/24px "Liberation Serif", "Noto Sans CJK SC", serif;
          margin: 0;
          text-align: center;
        }
        header button {
          background: none;
          border: 1px solid #8cc0ff;
          height: 15px;
          margin: 0 2px 6px 0;
          padding: 0;
          width: 16px;
        }
        header svg {
          display: block;
          fill: #000000;
          stroke: #8cc0ff;
        }
        .ratio {
          background: linear-gradient( to right, #ff4040 70%, #00e000 70% );
          border-bottom: 1px solid var( --rule );
          border-top: 1px solid var( --rule );
          height: 4px;
        }
        table {
          border-bottom: 1px solid var( --rule );
          border-spacing: 0;
          table-layout: fixed;
          width: 240px;
        }
        th, td {
          height: 20px;
          line-height: 20px;
          padding: 0;
          text-align: right;
          white-space: nowrap;
        }
        th {
          font-weight: normal;
          padding-left: 4px;
          text-align: left;
        }
        td {
          font-weight: bold;
        }
        .size, th + td + th {
          padding-left: 14px;
          text-align: left;
        }
        .best th, .best td {
          height: 30px;
          line-height: 30px;
        }
        .best td {
          font-size: 21px;
        }
        .last {
          padding-right: 5px;
        }
        .ticks {
          border-bottom: 0;
        }
        .ticks th, .ticks td {
          height: 22px;
          line-height: 22px;
          padding-left: 0;
          text-align: right;
        }
        .ticks thead th {
          color: #808080;
        }
        .ticks thead th:first-child {
          padding-left: 4px;
          text-align: left;
        }
        .ticks .kind {
          font-weight: normal;
          padding-left: 8px;
          text-align: left;
        }
        .ticks .sec {
          font-size: 12px;
          font-weight: normal;
        }
        .r {
          color: var( --up );
        }
        .g {
          color: var( --gain );
        }
        .y {
          color: #ffff00;
        }
        footer {
          border-top: 1px solid var( --rule );
          display: flex;
          font-size: 12px;
          height: 15px;
          line-height: 14px;
          margin-top: auto;
        }
        footer a {
          border-right: 1px solid var( --rule );
          color: #f0f0f0;
          height: 13px;
          text-align: center;
          text-decoration: none;
          width: 36px;
        }
        footer a:first-child {
          border-bottom: 1px solid var( --rule );
          border-radius: 0 0 3px 3px;
        }
      </style>
      <header>
        <h2>螺纹2410(rb2410)</h2>
        <button type="button" aria-label="弹出"><svg width="14" height="13"><path d="M5.5 1.5h7v5h-7zM2.5 6.5h6v5h-6z"/></svg></button>
      </header>
      <div class="ratio"></div>
      <table>
        <colgroup><col width="36"><col width="77"><col></colgroup>
        ${ASKS.map( level ).join( '' )}
      </table>
      <table>
        <colgroup><col width="36"><col width="77"><col></colgroup>
        ${BIDS.map( level ).join( '' )}
      </table>
      <table>
        <colgroup><col width="36"><col width="77"><col width="50"><col></colgroup>
        ${STATS.map( ( [a, b, c, d, e, f] ) => `<tr><th>${a}</th><td class="${c}">${b}</td><th>${d}</th><td class="${f} last">${e}</td></tr>` ).join( '' )}
      </table>
      <table class="ticks">
        <colgroup><col width="40"><col width="67"><col width="48"><col width="49"><col></colgroup>
        <thead><tr><th>北京</th><th>价格</th><th>√大单</th><th>仓差</th><th class="kind">性质</th></tr></thead>
        <tbody>
          ${TICKS.map( ( [time, price, size, change, kind, tone] ) => `<tr><td${time.length < 5 ? ' class="sec"' : ''}>${time}</td><td class="r">${price}</td><td class="${tone}">${size}</td><td class="y">${change}</td><td class="kind ${tone}">${kind}</td></tr>` ).join( '' )}
        </tbody>
      </table>
      <footer><a href="#">笔</a><a href="#">权</a></footer>
    `;
  }
}

class TBStatsDialog extends TBElement {
  markup() {
    const fields = [
      ['起始时间', '2024-04-01'], ['结束时间', '2024-07-12'], ['期初价', '3439'], ['最高价', '3820'], ['最低价', '3408'], ['期末价', '3523'],
      ['成交量', '100320593', '分析周期'], ['仓差', '614056', '共69个'], ['加权均价', '3636'], ['区间涨幅', '+2.26%'], ['区间振幅', '11.96%']
    ];
    return `
      <style>
        :host {
          background: #f0f0f0;
          box-shadow: 0 0 0 1px #303030;
          color: #000000;
          display: block;
          left: 718px;
          position: absolute;
          top: 505px;
          width: 308px;
        }
        header {
          align-items: center;
          background: #ffffff;
          display: flex;
          height: 26px;
          padding: 0 9px 0 3px;
        }
        h2 {
          color: #999999;
          flex: 1;
          font-size: 12px;
          font-weight: normal;
          margin: 0;
        }
        header button {
          background: none;
          border: 0;
          height: 12px;
          padding: 0;
          width: 12px;
        }
        svg {
          display: block;
        }
        form {
          display: grid;
          gap: 4px 13px;
          grid-auto-rows: 20px;
          grid-template-columns: 79px 120px 67px;
          line-height: 20px;
          padding: 12px 0;
        }
        label {
          grid-column: 1;
          text-align: right;
        }
        .field {
          background: #ffffff;
          border: 1px solid #7f9db9;
          display: flex;
        }
        input {
          background: none;
          border: 0;
          font: 10px/18px "DejaVu Sans Mono", monospace;
          min-width: 0;
          outline: 0;
          padding: 0 0 2px 2px;
          width: 100%;
        }
        .spin {
          background: #b4ccfa;
          border-left: 1px solid #7f9db9;
          display: flex;
          flex: none;
          flex-direction: column;
          width: 15px;
        }
        .spin button {
          background: none;
          border: 0;
          flex: 1;
          padding: 2px 4px;
        }
        output {
          text-align: center;
        }
        .close {
          background: linear-gradient( #ffffff, #ecebe5 );
          border: 1px solid #003c74;
          border-radius: 3px;
          color: #000000;
          font: 12px/16px "Noto Sans CJK SC", sans-serif;
          grid-column: 3;
          grid-row: 12;
          justify-self: end;
          padding: 0;
          width: 65px;
        }
      </style>
      <header>
        <h2>螺纹2410 区间统计</h2>
        <button type="button" aria-label="关闭"><svg width="12" height="12"><path d="M1 1l10 10M11 1L1 11" stroke="#808080"/></svg></button>
      </header>
      <form>
        ${fields.map( ( [name, value, note], i ) => `
          <label for="f${i}">${name}</label>
          <div class="field">
            <input id="f${i}" type="text" value="${value}">
            ${i < 2 ? `<div class="spin">
              <button type="button" aria-label="增加"><svg width="7" height="5"><path d="M0 4L3.5 0 7 4z" fill="#4d6185"/></svg></button>
              <button type="button" aria-label="减少"><svg width="7" height="5"><path d="M0 0L3.5 4 7 0z" fill="#4d6185"/></svg></button>
            </div>` : ''}
          </div>
          ${note ? `<output>${note}</output>` : ''}` ).join( '' )}
        <button class="close" type="button">关闭</button>
      </form>
    `;
  }
}

window.customElements.define( 'tb-taskbar', TBTaskbar );
window.customElements.define( 'tb-window', TBWindow );
window.customElements.define( 'tb-menu-bar', TBMenuBar );
window.customElements.define( 'tb-tool-bar', TBToolBar );
window.customElements.define( 'tb-side-tabs', TBSideTabs );
window.customElements.define( 'tb-chart-pane', TBChartPane );
window.customElements.define( 'tb-chart-board', TBChartBoard );
window.customElements.define( 'tb-quote-panel', TBQuotePanel );
window.customElements.define( 'tb-stats-dialog', TBStatsDialog );
</script>
</body>
</html>
